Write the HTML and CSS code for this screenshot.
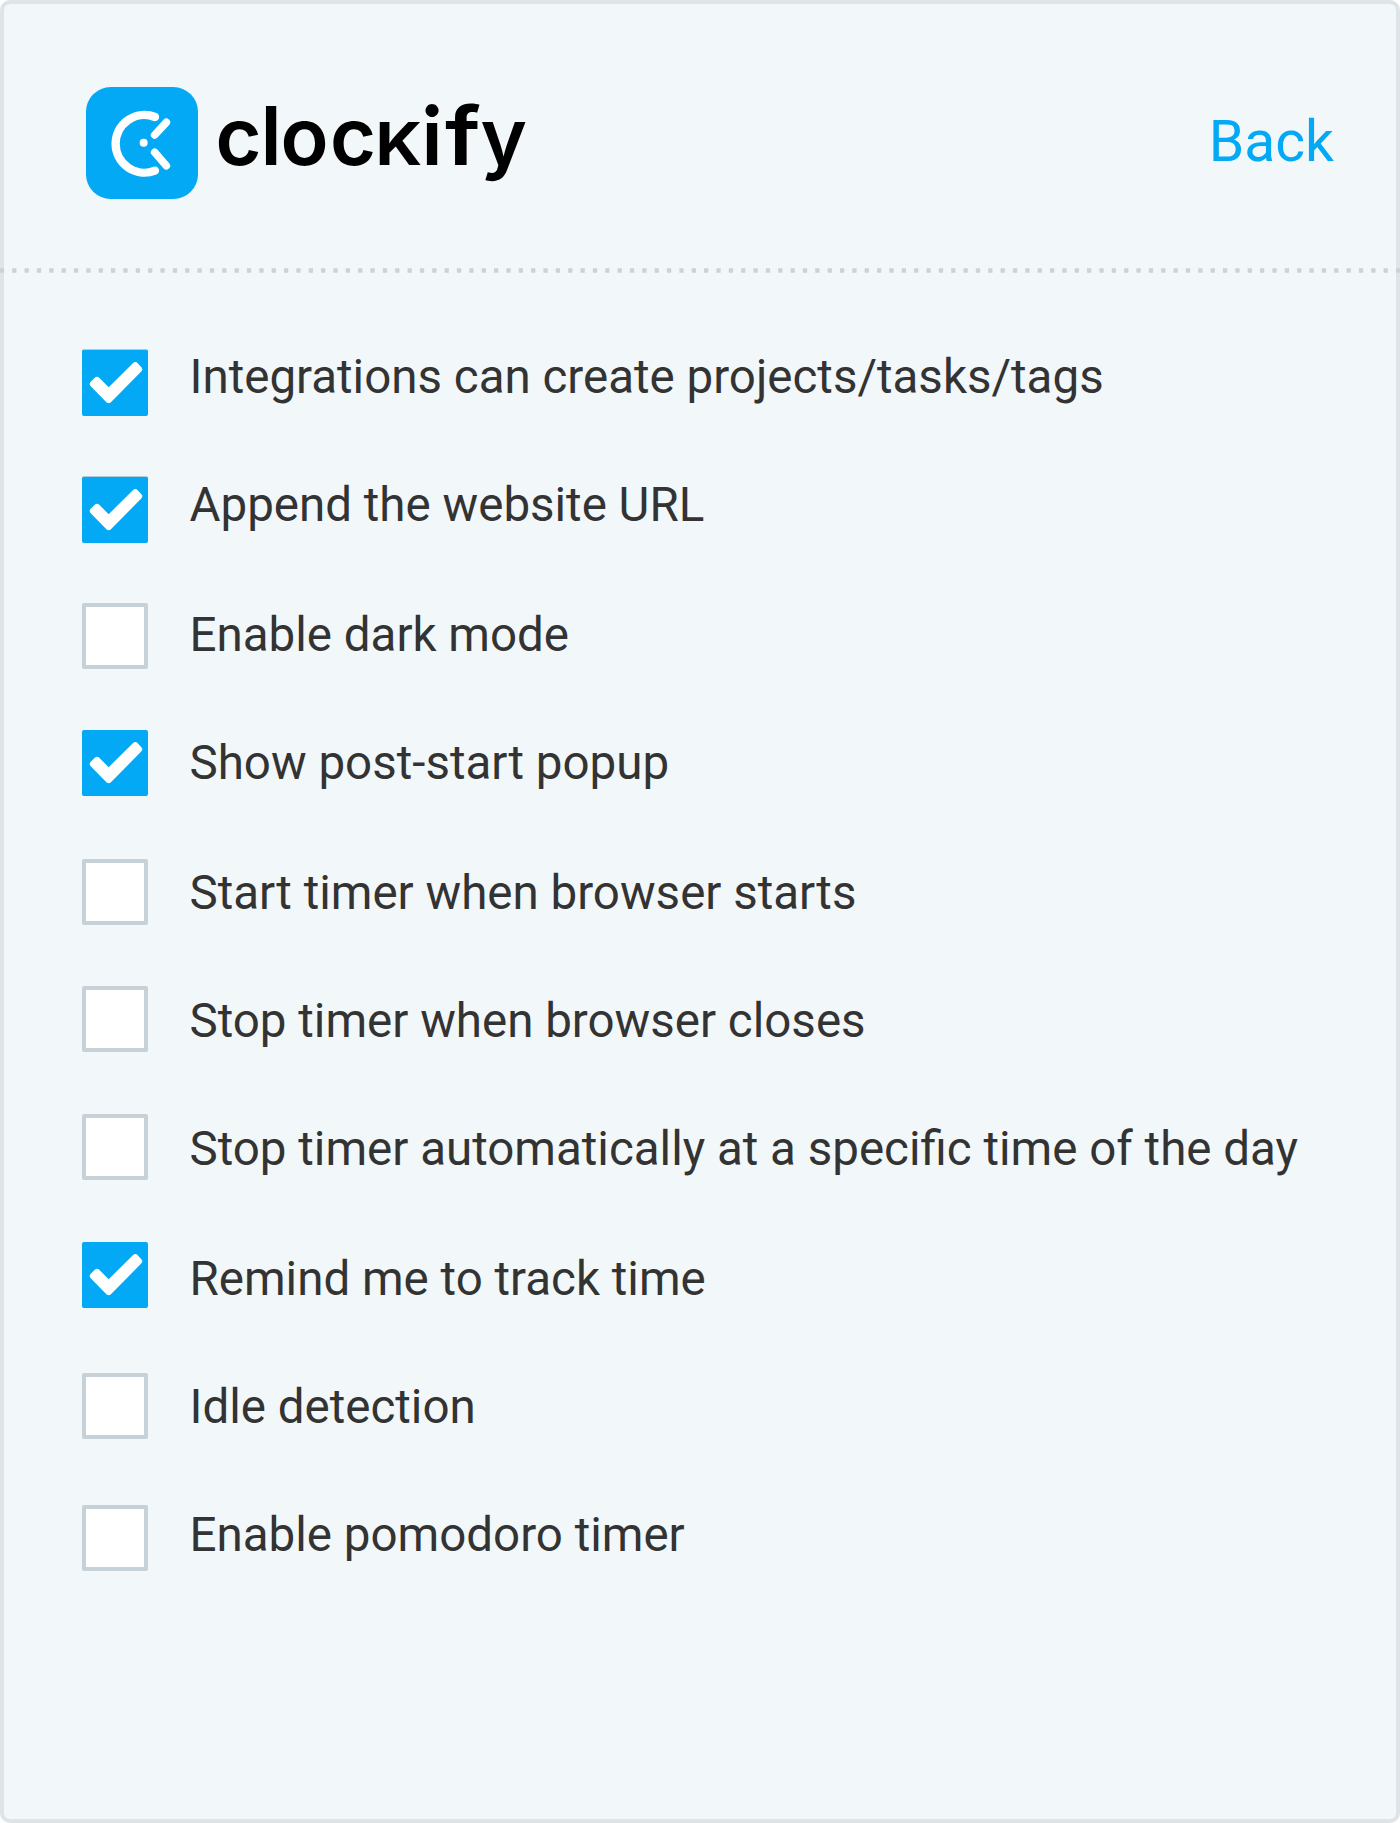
FILE: index.html
```html
<!DOCTYPE html>
<html lang="en">
<head>
<meta charset="utf-8">
<title>Clockify settings</title>
<link rel="stylesheet" href="styles.css">
</head>
<body>
<svg class="defs" width="0" height="0" aria-hidden="true">
  <symbol id="check" viewBox="0 0 198 198"><path d="M33 102L45 90L80 125L160 46L171 58L80 150Z" fill="#fff" stroke="#fff" stroke-width="19" stroke-linejoin="round"/></symbol>
</svg>
<main class="panel">
  <header class="header">
    <div class="brand">
      <svg class="mark" viewBox="0 0 336 336" aria-hidden="true">
        <rect width="336" height="336" rx="74" fill="#03a9f4"/>
        <g fill="none" stroke="#fff" stroke-linecap="round">
          <path d="M207 90A86.5 86.5 0 1 0 207 251" stroke-width="25"/>
          <path d="M241 106L206 144M206 196L241 236" stroke-width="23"/>
        </g>
        <circle cx="173" cy="167.5" r="12" fill="#fff"/>
      </svg>
      <svg class="wordmark" viewBox="0 0 320 112"><text y="77.500" x="1.500">c</text><text class="stem" y="77.500" x="46.500">l</text><text y="77.500" x="66.500 116">oc</text><text class="small-k" transform="translate(161.500 77.500) scale(1.1 1)">K</text><text class="dotted" y="77.500" x="207.500">i</text><text class="tall" transform="translate(231 77.500) scale(1.130 1)">f</text><text y="77.500" x="266.500">y</text></svg>
    </div>
    <a class="back">Back</a>
  </header>
  <svg class="divider" viewBox="0 0 1400 5" aria-hidden="true"><line x1="-.2" x2="1400" y1="2.500" y2="2.500" stroke="#cad4d7" stroke-width="4.500" stroke-dasharray="4.300 8.055"/></svg>
  <ul class="options">
    <li class="option"><span class="box on edged"><svg><use href="#check"/></svg></span><span class="label">Integrations can create projects/tasks/tags</span></li>
    <li class="option"><span class="box on edged"><svg><use href="#check"/></svg></span><span class="label">Append the website URL</span></li>
    <li class="option"><span class="box"></span><span class="label">Enable dark mode</span></li>
    <li class="option"><span class="box on"><svg><use href="#check"/></svg></span><span class="label">Show post-start popup</span></li>
    <li class="option"><span class="box"></span><span class="label">Start timer when browser starts</span></li>
    <li class="option"><span class="box"></span><span class="label">Stop timer when browser closes</span></li>
    <li class="option"><span class="box"></span><span class="label">Stop timer automatically at a specific time of the day</span></li>
    <li class="option"><span class="box on"><svg><use href="#check"/></svg></span><span class="label">Remind me to track time</span></li>
    <li class="option"><span class="box"></span><span class="label">Idle detection</span></li>
    <li class="option"><span class="box"></span><span class="label">Enable pomodoro timer</span></li>
  </ul>
</main>
</body>
</html>
```
FILE: styles.css
```css
* { box-sizing: border-box; }
body { margin: 0; background: #fff; font-family: Roboto, sans-serif; color: #333; }
.defs { display: none; }
.panel { width: 1400px; height: 1823px; background: #f2f7fa; border: 4px solid #dfe4e8; border-radius: 10px; }
.header { height: 264px; display: flex; justify-content: space-between; align-items: flex-start; padding: 83px 62px 0 82px; }
.brand { display: flex; gap: 16px; }
.mark { width: 112px; height: 112px; }
.wordmark { width: 320px; height: 112px; overflow: visible; font: 600 79px Inter, sans-serif; fill: #000; }
.stem { font-size: 81px; }
.tall { font-size: 81px; }
.small-k { font-size: 59px; font-weight: 700; }
.dotted { font-family: Lato, sans-serif; font-size: 83px; font-weight: 700; }
.back { color: #03a9f4; font-size: 57px; line-height: 68px; margin-top: 21px; }
.divider { display: block; width: 1400px; height: 5px; margin-left: -4px; }
.options { list-style: none; margin: 0; padding: 71px 0 0 78px; }
.option { display: flex; gap: 41.500px; height: 128px; }
.option:nth-child(2), .option:nth-child(4), .option:nth-child(7) { height: 130px; }
.label { font-size: 47.500px; line-height: 66px; white-space: nowrap; }
.box { flex: none; width: 66px; height: 66px; background: #fff; border: 4px solid #c6d2d8; border-radius: 2px; margin-top: 5px; }
.on { border: 0; background: #03a9f4; }
.edged { height: 67px; border-top: 1px solid #b5cad4; }
.box svg { display: block; width: 66px; height: 66px; }
.option:nth-child(1) .box { margin-top: 5px; }
.option:nth-child(2) .box { margin-top: 4px; }
.option:nth-child(3) .box { margin-top: 1px; }
.option:nth-child(4) .box { margin-top: 0; }
.option:nth-child(5) .box { margin-top: -1px; }
.option:nth-child(6) .box { margin-top: -2px; }
.option:nth-child(7) .box { margin-top: -2px; }
.option:nth-child(8) .box { margin-top: -4px; }
.option:nth-child(9) .box { margin-top: -1px; }
.option:nth-child(10) .box { margin-top: 3px; }
```
